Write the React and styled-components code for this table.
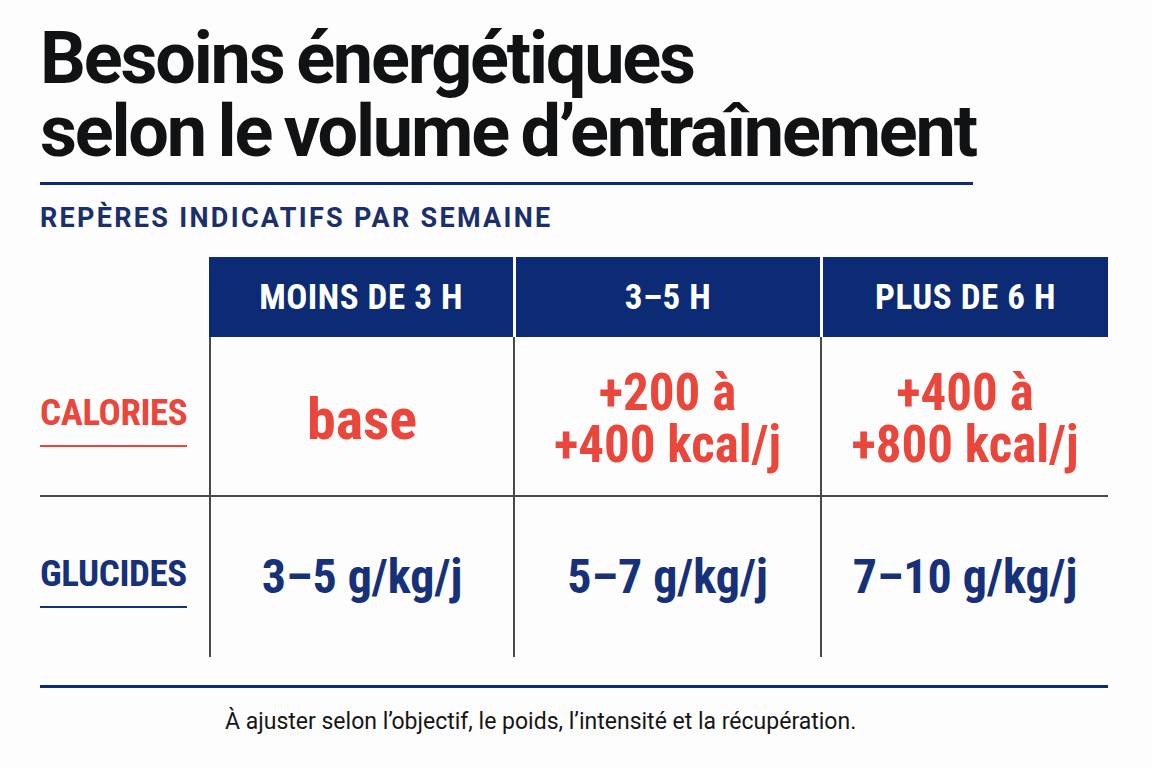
import React from 'react';
import styled, { createGlobalStyle } from 'styled-components';

const GlobalStyle = createGlobalStyle`
  html, body {
    margin: 0;
    padding: 0;
    background: #fdfdfd;
  }
`;

const NAVY = '#0c2b74';
const INK = '#163179';
const RED = '#e9473c';
const GRID = '#4a4a4a';

const Page = styled.div`
  width: 1152px;
  height: 768px;
  box-sizing: border-box;
  padding: 22px 44px 0 40px;
  font-family: Roboto, 'Liberation Sans', sans-serif;
  color: #111;
  overflow: hidden;
`;

const Title = styled.h1`
  margin: 0;
  white-space: nowrap;
  font-size: 72px;
  line-height: 73px;
  font-weight: 700;
  letter-spacing: -2.2px;
  word-spacing: -3px;
  color: #111214;
`;

const Rule = styled.div`
  width: ${p => p.$w}px;
  height: 3px;
  background: ${NAVY};
  margin-top: ${p => p.$top}px;
`;

const Subtitle = styled.div`
  margin-top: 19px;
  font-size: 27px;
  line-height: 28px;
  font-weight: 700;
  letter-spacing: 2.3px;
  color: #1a2f6c;
`;

const Table = styled.div`
  display: grid;
  grid-template-columns: 169px 304px 307px 288px;
  grid-template-rows: 80px 160px 160px;
  margin-top: 25px;
  font-family: 'Liberation Sans Narrow', 'Roboto Condensed', Roboto, sans-serif;
`;

const Corner = styled.div``;

const Head = styled.div`
  background: ${NAVY};
  border-left: ${p => (p.$first ? 0 : 3)}px solid #fdfdfd;
  display: flex;
  align-items: center;
  justify-content: center;
  color: #fff;
  font-size: 35px;
  font-weight: 700;
  letter-spacing: 0.5px;
`;

const Label = styled.div`
  display: flex;
  align-items: flex-start;
  justify-content: center;
  flex-direction: column;
  padding-top: 8px;
  border-bottom: ${p => (p.$last ? 'none' : `2px solid ${GRID}`)};
`;

const LabelText = styled.span`
  font-size: 37px;
  line-height: 40px;
  font-weight: 700;
  letter-spacing: -0.4px;
  color: ${p => p.$color};
  padding-bottom: 12px;
  border-bottom: 2px solid ${p => p.$color};
`;

const Cell = styled.div`
  border-left: 2px solid ${GRID};
  border-bottom: ${p => (p.$last ? 'none' : `2px solid ${GRID}`)};
  display: flex;
  align-items: center;
  justify-content: center;
  padding-top: ${p => (p.$last ? 0 : 6)}px;
  text-align: center;
  color: ${p => p.$color};
  font-size: ${p => p.$size}px;
  line-height: 52px;
  font-weight: 700;
`;

const Footer = styled.p`
  margin: 21px 0 0;
  padding-left: 185px;
  font-size: 23px;
  line-height: 26px;
  color: #161616;
`;

const columns = ['MOINS DE 3 H', '3–5 H', 'PLUS DE 6 H'];

const rows = [
  {
    label: 'CALORIES',
    color: RED,
    values: [
      { lines: ['base'], size: 58 },
      { lines: ['+200 à', '+400 kcal/j'], size: 51 },
      { lines: ['+400 à', '+800 kcal/j'], size: 51 },
    ],
  },
  {
    label: 'GLUCIDES',
    color: INK,
    values: [
      { lines: ['3–5 g/kg/j'], size: 48 },
      { lines: ['5–7 g/kg/j'], size: 48 },
      { lines: ['7–10 g/kg/j'], size: 48 },
    ],
  },
];

export default function App() {
  return (
    <Page>
      <GlobalStyle />
      <Title>
        Besoins énergétiques
        <br />
        selon le volume d’entraînement
      </Title>
      <Rule $w={933} $top={14} />
      <Subtitle>REPÈRES INDICATIFS PAR SEMAINE</Subtitle>
      <Table>
        <Corner />
        {columns.map((c, i) => (
          <Head key={c} $first={i === 0}>{c}</Head>
        ))}
        {rows.map((r, ri) => {
          const last = ri === rows.length - 1;
          return (
            <React.Fragment key={r.label}>
              <Label $last={last}>
                <LabelText $color={r.color}>{r.label}</LabelText>
              </Label>
              {r.values.map((v, vi) => (
                <Cell key={vi} $color={r.color} $last={last} $size={v.size}>
                  <div>
                    {v.lines.map((line, li) => (
                      <div key={li}>{line}</div>
                    ))}
                  </div>
                </Cell>
              ))}
            </React.Fragment>
          );
        })}
      </Table>
      <Rule $w={1068} $top={28} />
      <Footer>À ajuster selon l’objectif, le poids, l’intensité et la récupération.</Footer>
    </Page>
  );
}
